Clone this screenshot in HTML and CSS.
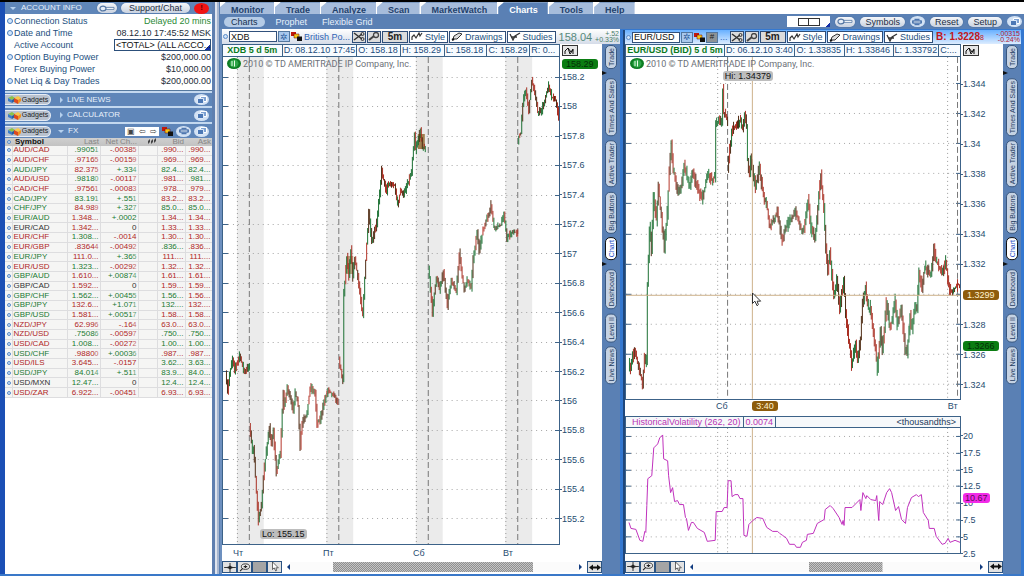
FILE: index.html
```html
<!DOCTYPE html>
<html lang="en">
<head>
<meta charset="utf-8">
<title>Charts</title>
<link rel="stylesheet" href="styles.css">
</head>
<body>
<svg class="defs" width="0" height="0" aria-hidden="true">
  <defs>
    <pattern id="weave" width="2" height="2" patternUnits="userSpaceOnUse"><rect width="2" height="2" fill="#c4c4c4"/><path d="M0 0h1v1H0zM1 1h1v1H1z" fill="#8f8f8f"/></pattern>
    <symbol id="key" viewBox="0 0 16 7"><path d="M5 2.4h10v2H5z" fill="#fff" stroke="#5476a3" stroke-width=".8"/><ellipse cx="4" cy="3.5" rx="3" ry="2.4" fill="#e7eef8" stroke="#5476a3" stroke-width="1.2"/></symbol>
    <symbol id="windows" viewBox="0 0 10 8"><path d="M3.5.5h6v5h-6z" fill="#7ea2d2" stroke="#fff"/><path d="M.5 2.5h6v5h-6z" fill="#4c78b5" stroke="#dbe8f8"/></symbol>
    <symbol id="printer" viewBox="0 0 12 8"><path d="M3 0h6v2H3zM3 6h6v2H3z" fill="#4d76ae"/><rect y="2" width="12" height="4" rx="1" fill="#4d76ae"/><path d="M2 4h8" stroke="#fff"/></symbol>
    <symbol id="colors" viewBox="0 0 11 9"><path d="M0 0h5v4H0z" fill="#c0180c"/><path d="M3 2h5v4H3z" fill="#f6c618" stroke="#600" stroke-width=".5"/><path d="M6 4.500h5V9H6z" fill="#111"/></symbol>
    <symbol id="gadget" viewBox="0 0 14 9"><path d="M1 3l4-2 3 2-3 2z" fill="#8ac34a"/><path d="M1 3l4 2v3L1 6z" fill="#3c7cc9"/><path d="M5 5l3-2v3L5 8z" fill="#2c5e9d"/><path d="M7 3l4-2 3 2-3 2z" fill="#f8c84a"/><path d="M7 3l4 2v4L7 7z" fill="#dc4a1e"/><path d="M11 5l3-2v3l-3 3z" fill="#f09020"/></symbol>
    <symbol id="shuffle" viewBox="0 0 12 9"><path d="M1 1l8 6M1 8l8-6" fill="none" stroke="#333" stroke-width="1.500"/><circle cx="9.500" cy="2" r="1.500" fill="none" stroke="#333"/><circle cx="9.500" cy="7" r="1.500" fill="none" stroke="#333"/></symbol>
    <symbol id="wrench" viewBox="0 0 12 9"><path d="M1 8l5-4" stroke="#444" stroke-width="2"/><circle cx="8" cy="3" r="2.500" fill="none" stroke="#444" stroke-width="1.300"/></symbol>
    <symbol id="style" viewBox="0 0 12 9"><path d="M1 8V5l2-2 2 3 3-5 1 3 2-3" fill="none" stroke="#333" stroke-width="1.200"/></symbol>
    <symbol id="pencil" viewBox="0 0 12 9"><path d="M2 7l1-3 5-3 3 1-5 5z" fill="#ddd" stroke="#333"/><path d="M1 8l2-1" stroke="#111" stroke-width="2"/></symbol>
    <symbol id="studies" viewBox="0 0 12 9"><path d="M1 2l3 6 2-4 5-3M2 5h6" fill="none" stroke="#333" stroke-width="1.300"/></symbol>
    <symbol id="cross" viewBox="0 0 13 10"><path d="M6.500 0v10M0 5h13" stroke="#222"/><path d="M4 5h5M6.500 3v4" stroke="#222" stroke-width="2"/></symbol>
    <symbol id="loupe" viewBox="0 0 13 10"><ellipse cx="7" cy="4" rx="4.500" ry="3" fill="#eee" stroke="#222"/><path d="M5 4h4M7 2.500v3M4 6L1 9" stroke="#222" stroke-width="1.200"/></symbol>
    <symbol id="arrow" viewBox="0 0 8 12"><path d="M1 0v9l2-2 2 4 1-1-1-3h3z" fill="#fff" stroke="#222" stroke-width=".8"/></symbol>
    <symbol id="both" viewBox="0 0 12 8"><path d="M0 4l4-3v2h4V1l4 3-4 3V5H4v2z" fill="#111"/></symbol>
    <symbol id="spark" viewBox="0 0 12 9"><path d="M1 8V5l3-3 3 4 2-3v5M4 2l2 6 3-4" fill="none" stroke="#111"/></symbol>
    <symbol id="coin" viewBox="0 0 14 11"><ellipse cx="7" cy="5.500" rx="7" ry="5.500" fill="#0c7d22"/><ellipse cx="7" cy="5.500" rx="4.500" ry="4" fill="#2fa548"/><path d="M5 3v5M7.500 2.500v6" stroke="#e9ffe9"/></symbol>
  </defs>
</svg>

<div class="app">
  <aside class="sidebar">
    <header class="bar">
      <span class="caret open"></span><h2 class="grow">ACCOUNT INFO</h2>
      <button class="pill key" aria-label="Login"><svg class="ic-key"><use href="#key"/></svg></button>
      <button class="pill support">Support/Chat</button>
      <button class="alert" aria-label="Alerts">!</button>
    </header>
    <dl class="info">
      <div class="dot"><dt>Connection Status</dt><dd class="up">Delayed 20 mins</dd></div>
      <div class="dot"><dt>Date and Time</dt><dd>08.12.10 17:45:52 MSK</dd></div>
      <div><dt><label for="account">Active Account</label></dt><dd><select id="account" class="account"><option>&lt;TOTAL&gt; (ALL ACCO...</option></select></dd></div>
      <div class="dot"><dt>Option Buying Power</dt><dd>$200,000.00</dd></div>
      <div><dt>Forex Buying Power</dt><dd>$10,000.00</dd></div>
      <div class="dot"><dt>Net Liq &amp; Day Trades</dt><dd>$200,000.00</dd></div>
    </dl>
    <header class="bar gadget">
      <button class="gadget-btn"><svg class="ic-gadget"><use href="#gadget"/></svg>Gadgets</button>
      <span class="caret"></span><h2 class="grow">LIVE NEWS</h2>
      <button class="round" aria-label="Detach"><svg class="ic-win"><use href="#windows"/></svg></button>
    </header>
    <header class="bar gadget">
      <button class="gadget-btn"><svg class="ic-gadget"><use href="#gadget"/></svg>Gadgets</button>
      <span class="caret"></span><h2 class="grow">CALCULATOR</h2>
      <button class="round" aria-label="Detach"><svg class="ic-win"><use href="#windows"/></svg></button>
    </header>
    <header class="bar gadget">
      <button class="gadget-btn"><svg class="ic-gadget"><use href="#gadget"/></svg>Gadgets</button>
      <span class="caret open"></span><h2 class="grow">FX</h2>
      <span class="nav"><button aria-label="List">▣</button><button aria-label="Back">⇦</button><button aria-label="Forward">⇨</button></span>
      <svg class="ic-colors"><use href="#colors"/></svg>
      <button class="round" aria-label="Print"><svg class="ic-win"><use href="#printer"/></svg></button>
      <button class="round" aria-label="Detach"><svg class="ic-win"><use href="#windows"/></svg></button>
    </header>
    <table class="quotes">
      <colgroup><col class="c-dot"><col class="c-sym"><col class="c-last"><col class="c-net"><col class="c-gap"><col class="c-bid"><col class="c-ask"></colgroup>
      <thead><tr><th><i class="bullet"></i></th><th class="sym">Symbol</th><th>Last</th><th>Net Ch...</th><th><svg class="ic-stack" viewBox="0 0 9 6"><path d="M1 3l2-2v3l-2 2zM4 3l2-2v3L4 6zM7 2l2-2v3L7 5z" fill="#444"/></svg></th><th>Bid</th><th>Ask</th></tr></thead>
      <tbody id="quotes"></tbody>
    </table>
  </aside>

  <div class="splitter"></div>

  <main class="main">
    <nav class="tabs">
      <a href="#monitor">Monitor</a><a href="#trade">Trade</a><a href="#analyze">Analyze</a><a href="#scan">Scan</a><a href="#marketwatch">MarketWatch</a><a href="#charts" class="on">Charts</a><a href="#tools">Tools</a><a href="#help">Help</a>
    </nav>
    <div class="subbar">
      <nav class="subnav"><a href="#charts" class="on">Charts</a><a href="#prophet">Prophet</a><a href="#grid">Flexible Grid</a></nav>
      <div class="actions">
        <button class="layout" aria-label="Grid layout"><i></i><i></i></button>
        <button class="pill key" aria-label="Login"><svg class="ic-key"><use href="#key"/></svg></button>
        <button class="pill">Symbols</button>
        <button class="round" aria-label="Print"><svg class="ic-win"><use href="#printer"/></svg></button>
        <button class="pill">Reset</button>
        <button class="pill">Setup</button>
        <button class="round" aria-label="Detach"><svg class="ic-win"><use href="#windows"/></svg></button>
      </div>
    </div>

    <div class="panels">
      <section class="panel">
        <div class="toolbar">
          <i class="bullet"></i>
          <input class="symbol" value="XDB" aria-label="Symbol">
          <button class="tiny" aria-label="Recent">✲</button>
          <svg class="ic-colors"><use href="#colors"/></svg>
          <span class="name">British Po...</span>
          <button class="tool" aria-label="Share"><svg class="ic"><use href="#shuffle"/></svg></button>
          <button class="tool" aria-label="Settings"><svg class="ic"><use href="#wrench"/></svg></button>
          <button class="tool frame">5m</button>
          <button class="tool text"><svg class="ic"><use href="#style"/></svg>Style</button>
          <button class="tool text"><svg class="ic"><use href="#pencil"/></svg>Drawings</button>
          <button class="tool text"><svg class="ic"><use href="#studies"/></svg>Studies</button>
          <span class="price">158.04</span>
          <span class="change">+.52<br>+0.33%</span>
        </div>
        <div class="body">
          <div class="work">
            <div class="ohlc left"><b>XDB 5 d 5m</b><span>D: 08.12.10 17:45</span><span>O: 158.18</span><span>H: 158.29</span><span>L: 158.18</span><span>C: 158.29</span><span>R: 0...</span></div>
            <div class="corner"><button class="spark" aria-label="Study"><svg class="ic"><use href="#spark"/></svg></button></div>
            <div class="plot">
              <svg id="xdb" class="canvas" viewBox="222 57 338 487" preserveAspectRatio="none"></svg>
              <p class="copy"><svg class="ic-coin"><use href="#coin"/></svg>2010 © TD AMERITRADE IP Company, Inc.</p>
              <span class="flag lo">Lo: 155.15</span>
            </div>
            <div class="axis a-left"><span>158.2</span><span>158</span><span>157.8</span><span>157.6</span><span>157.4</span><span>157.2</span><span>157</span><span>156.8</span><span>156.6</span><span>156.4</span><span>156.2</span><span>156</span><span>155.8</span><span>155.6</span><span>155.4</span><span>155.2</span><em class="tag green last-x">158.29</em></div>
            <div class="days d-left"><span>Чт</span><span>Пт</span><span>Сб</span><span>Вт</span></div>
            <div class="scroll">
              <button class="sq" aria-label="Crosshair"><svg class="ic"><use href="#cross"/></svg></button><button class="sq" aria-label="Zoom"><svg class="ic"><use href="#loupe"/></svg></button><button class="sq dim" aria-label="Pan"></button><button class="sq" aria-label="Pointer"><svg class="ic-arrow"><use href="#arrow"/></svg></button>
              <span class="tri back"></span>
              <div class="track t-left"><svg class="thumb"><rect width="100%" height="100%" fill="url(#weave)"/></svg></div>
              <span class="tri fwd"></span>
              <button class="sq" aria-label="Fit"><svg class="ic"><use href="#both"/></svg></button>
            </div>
          </div>
          <nav class="side"><a href="#t">Trade</a><i class="mark"></i><a href="#ts">Times And Sales</a><a href="#at">Active Trader</a><a href="#bb">Big Buttons</a><a href="#c" class="on">Chart</a><i class="mark"></i><a href="#d">Dashboard</a><a href="#l2">Level II</a><a href="#ln">Live News</a></nav>
        </div>
      </section>

      <section class="panel active">
        <div class="toolbar">
          <i class="bullet"></i>
          <input class="symbol" value="EUR/USD" aria-label="Symbol">
          <button class="tiny" aria-label="Recent">✲</button>
          <svg class="ic-colors"><use href="#colors"/></svg>
          <button class="tiny hash">#</button>
          <span class="name short">...</span>
          <button class="tool" aria-label="Share"><svg class="ic"><use href="#shuffle"/></svg></button>
          <button class="tool" aria-label="Settings"><svg class="ic"><use href="#wrench"/></svg></button>
          <button class="tool frame">5m</button>
          <button class="tool text"><svg class="ic"><use href="#style"/></svg>Style</button>
          <button class="tool text"><svg class="ic"><use href="#pencil"/></svg>Drawings</button>
          <button class="tool text"><svg class="ic"><use href="#studies"/></svg>Studies</button>
          <span class="price bid">B: 1.3228<small>8</small></span>
          <span class="change down">-.00315<br>-0.24%</span>
        </div>
        <div class="body">
          <div class="work two">
            <div class="ohlc right"><b>EUR/USD (BID) 5 d 5m</b><span>D: 06.12.10 3:40</span><span>O: 1.33835</span><span>H: 1.33846</span><span>L: 1.33792</span><span>C:...</span></div>
            <div class="corner"><button class="spark" aria-label="Study"><svg class="ic"><use href="#spark"/></svg></button></div>
            <div class="plot">
              <svg id="eur" class="canvas" viewBox="625 57 337 342" preserveAspectRatio="none"></svg>
              <p class="copy"><svg class="ic-coin"><use href="#coin"/></svg>2010 © TD AMERITRADE IP Company, Inc.</p>
              <span class="flag hi">Hi: 1.34379</span>
              <svg class="pointer"><use href="#arrow"/></svg>
            </div>
            <div class="axis a-right"><span>1.344</span><span>1.342</span><span>1.34</span><span>1.338</span><span>1.336</span><span>1.334</span><span>1.332</span><span class="blank"></span><span>1.328</span><span>1.326</span><span>1.324</span><em class="tag gold here">1.3299</em><em class="tag green last-e">1.3266</em></div>
            <div class="days d-right"><span>Сб</span><em class="tag gold">3:40</em><span>Вт</span></div>
            <div class="study"><span>HistoricalVolatility (262, 20)</span><span>0.0074</span><span class="unit">&lt;thousandths&gt;</span></div>
            <div class="plot">
              <svg id="vol" class="canvas" viewBox="625 427 337 126" preserveAspectRatio="none"></svg>
            </div>
            <div class="axis a-vol"><span>20</span><span>17.5</span><span>15</span><span>12.5</span><span>10</span><span>7.5</span><span>5</span><span>2.5</span><em class="tag pink">10.67</em></div>
            <div class="scroll">
              <button class="sq" aria-label="Crosshair"><svg class="ic"><use href="#cross"/></svg></button><button class="sq" aria-label="Zoom"><svg class="ic"><use href="#loupe"/></svg></button><button class="sq dim" aria-label="Pan"></button><button class="sq" aria-label="Pointer"><svg class="ic-arrow"><use href="#arrow"/></svg></button>
              <span class="tri back"></span>
              <div class="track t-right"><svg class="thumb"><rect width="100%" height="100%" fill="url(#weave)"/></svg></div>
              <span class="tri fwd"></span>
              <button class="sq" aria-label="Fit"><svg class="ic"><use href="#both"/></svg></button>
            </div>
          </div>
          <nav class="side"><a href="#t">Trade</a><i class="mark"></i><a href="#ts">Times And Sales</a><a href="#at">Active Trader</a><a href="#bb">Big Buttons</a><a href="#c" class="on">Chart</a><i class="mark"></i><a href="#d">Dashboard</a><a href="#l2">Level II</a><a href="#ln">Live News</a></nav>
        </div>
      </section>
    </div>
  </main>
</div>
<script src="app.js"></script>
</body>
</html>
```
FILE: styles.css
```css
* { box-sizing: border-box; }
html, body { height: 100%; }
body { margin: 0; background: #5a80b4; color: #26384e; font: 9px/10px "Liberation Sans", Arial, sans-serif; overflow: hidden; }
button, input, select { font: inherit; color: inherit; margin: 0; padding: 0; border: 0; background: none; border-radius: 0; }
button { display: flex; align-items: center; justify-content: center; }
a { color: inherit; text-decoration: none; }
h2, p, dl, dd { margin: 0; font: inherit; }
.defs { position: absolute; }
.app { display: flex; height: 100vh; border-top: 2px solid #000; border-bottom: 2px solid #3a78c8; }
.grow { flex: 1; }

/* icons */
.ic { width: 12px; height: 9px; flex: none; }
.ic-key { width: 16px; height: 7px; }
.ic-win { width: 10px; height: 8px; }
.ic-colors { width: 11px; height: 9px; flex: none; }
.ic-gadget { width: 14px; height: 9px; flex: none; }
.ic-arrow { width: 8px; height: 10px; }
.ic-coin { width: 14px; height: 11px; flex: none; }
.ic-stack { width: 9px; height: 6px; }
.bullet { display: inline-block; width: 5px; height: 5px; border-radius: 50%; border: 1px solid #5b8bc8; background: #cfe2f7; flex: none; }

/* sidebar */
.sidebar { width: 212px; flex: none; border-left: 5px solid #1b4fb5; background: #fff; display: flex; flex-direction: column; }
.bar { display: flex; align-items: center; gap: 4px; height: 12px; flex: none; padding: 0 3px; background: #5f86b9; color: #e9f1fb; font-size: 8px; }
.bar.gadget { height: 15px; border-top: 2px solid #c3d8ef; padding-left: 0; gap: 3px; }
.bar.gadget + .bar.gadget { height: 16px; }
.caret { width: 0; height: 0; border: 3px solid transparent; border-left-color: #b5d0ee; border-right: 0; margin: 0 1px 0 6px; }
.caret.open { border: 3px solid transparent; border-top-color: #b5d0ee; border-bottom: 0; margin: 0 1px 0 2px; }
.gadget .caret.open { margin: 0 1px 0 4px; }
.pill { height: 10px; padding: 0 5px; border-radius: 5px; background: linear-gradient(#f4f6fa, #c9d2e0); color: #1c2c42; font-size: 9px; box-shadow: 0 0 1px #24446e; white-space: nowrap; }
.pill.key { padding: 0 2px; }
.pill.support { padding: 0 8px; }
.alert { width: 15px; height: 11px; border-radius: 50%; background: #f01414; color: #600; font-weight: 700; }
.round { width: 15px; height: 11px; border-radius: 50%; background: #d3e2f4; flex: none; }
.gadget-btn { height: 11px; width: 46px; border-radius: 0 6px 6px 0; background: #b9c2cf; color: #222; font-size: 7px; gap: 1px; border: 1px solid #e6ecf4; border-left: 0; }
.nav { display: flex; gap: 4px; padding: 0 2px; height: 9px; background: #fff; color: #444; line-height: 9px; }
.info { padding: 1px 1px 3px 9px; border-bottom: 1px solid #55799f; color: #1d4f80; }
.info > div { display: flex; justify-content: space-between; height: 12px; align-items: center; position: relative; }
.info .dot::before { content: ""; position: absolute; left: -7px; top: 3px; width: 4px; height: 4px; border: 1px solid #4a80c0; border-radius: 50%; background: #d4e6fa; }
.info dd { color: #222c38; }
.info dd.up { color: #2b8a35; }
.account { appearance: none; display: block; width: 97px; height: 12px; padding-left: 1px; border: 1px solid #2c4f7a; background: linear-gradient(135deg, transparent 95%, #1430a8 95%) #fff; color: #111; overflow: hidden; }
.quotes { table-layout: fixed; border-collapse: collapse; width: 100%; height: 260px; font-size: 8px; line-height: 8px; color: #333; }
.c-dot { width: 7px; } .c-sym { width: 55px; } .c-last { width: 33px; } .c-net { width: 38px; } .c-gap { width: 19px; } .c-bid { width: 28px; } .c-ask { width: 27px; }
.quotes th { background: linear-gradient(#cfcfcf, #c2c2c2); color: #858585; font-weight: 400; text-align: right; padding: 0 1px; font-size: 8px; }
.quotes th.sym { color: #111; font-weight: 700; text-align: left; padding-left: 3px; }
.quotes td { padding: 0 1px 0 0; text-align: right; border: 1px solid #dddddf; border-width: 0 1px 1px 0; white-space: nowrap; overflow: hidden; background: #f5f5f4; }
.quotes td:nth-child(2) { text-align: left; padding-left: 1px; }
.quotes td:first-child { text-align: left; padding: 0 0 0 1px; }
.quotes .bullet { display: block; margin: 0 auto; width: 4px; height: 4px; }
.quotes small { font-size: 7px; opacity: .7; }
.r { color: #b02626; } .g { color: #217a32; } .k { color: #333; }
.splitter { width: 8px; flex: none; background: linear-gradient(90deg, #5f7fb0 0 3px, #dfe4ee 3px 5px, #a7b6d0 5px 7px, #5a7fb2 7px); }

/* tabs */
.main { flex: 1; min-width: 0; display: flex; flex-direction: column; background: #fff; }
.tabs { display: flex; gap: 1px; height: 12px; align-items: flex-end; flex: none; }
.tabs a { padding: 1px 10px 0 11px; height: 12px; line-height: 12px; font-weight: 700; color: #1f416c; background: #a6bcdb; clip-path: polygon(6px 0, 100% 0, 100% 100%, 0 100%, 0 5px); border-top: 1px solid #7e9cc4; }
.tabs .on { background: #5a80b4; color: #fff; }
.subbar { display: flex; justify-content: space-between; align-items: center; height: 15px; flex: none; background: #5a80b4; color: #e8f1fc; }
.subnav { display: flex; gap: 7px; padding-left: 4px; }
.subnav a { padding: 0 4px; }
.subnav .on { background: #b5cbe6; color: #14304f; border-radius: 6px; padding: 0 7px; }
.actions { display: flex; align-items: center; gap: 5px; padding-right: 2px; }
.layout { width: 43px; height: 11px; background: linear-gradient(135deg, transparent 91%, #1430a8 91%) #fff; }
.layout i { width: 11px; height: 8px; border: 1px solid #333; }
.layout i + i { border-left: 0; }

/* chart panels */
.panels { flex: 1; min-height: 0; display: grid; grid-template-columns: 400fr 404fr; }
.panel { display: flex; flex-direction: column; min-width: 0; min-height: 0; border-left: 2px solid #6d90bf; }
.panel.active { border: solid #3478d0; border-width: 1px 3px 0 5px; border-left-style: ridge; }
.toolbar { display: flex; align-items: center; gap: 1px; height: 15px; flex: none; padding: 0 0 0 1px; background: linear-gradient(#fff, #d5dce8); white-space: nowrap; overflow: hidden; }
.active .toolbar { background: linear-gradient(#68b0ff, #dcecff); height: 14px; }
.symbol { width: 48px; height: 11px; flex: none; padding-left: 1px; border: 1px solid #31517c; background: #fff; color: #111; }
.tiny { width: 12px; height: 11px; flex: none; background: #a9c8ec; color: #2c5c9b; border: 1px solid #53779f; }
.tiny.hash { background: #8c9296; color: #222; font-size: 8px; }
.name { color: #3165b5; padding: 0 1px; flex: none; }
.tool { height: 12px; min-width: 14px; flex: none; padding: 0; border: 1px solid #2e4d78; background: #dcdcdc; }
.tool.frame { width: 26px; font-weight: 700; font-size: 10px; color: #222; }
.tool.text { background: #fff; color: #235080; gap: 2px; padding: 0 2px 0 1px; }
.price { font-size: 11px; color: #57897c; margin-left: 2px; flex: 1; }
.price.bid { color: #c01820; font-weight: 700; font-size: 10px; }
.price small { font-size: 7px; font-weight: 400; }
.change { font-size: 7px; line-height: 6px; color: #4d7f68; text-align: right; padding-right: 1px; }
.change.down { color: #b02030; }
.body { flex: 1; min-height: 0; display: flex; }
.work { flex: 1; min-width: 0; display: grid; grid-template: 13px 1fr 15px 14px / 1fr 42px; background: #fff; }
.work.two { grid-template-rows: 13px 342fr 16px 12px 126fr 6px 14px; }
.ohlc { display: grid; border: 1px solid #3c6288; background: #f7fbff; color: #1c4c7c; line-height: 11px; overflow: hidden; white-space: nowrap; }
.ohlc.left { grid-template-columns: 59fr 75fr 44fr 44fr 43fr 43fr 30fr; }
.ohlc.right { grid-template-columns: 99fr 71fr 50fr 49fr 46fr 22fr; }
.ohlc > * { padding-left: 1px; border-left: 1px solid #3c6288; min-width: 0; overflow: hidden; }
.ohlc b { color: #0b7a1c; border-left: 0; text-align: center; font-size: 9px; padding: 0; }
.corner { display: flex; align-items: center; padding-left: 2px; }
.spark { width: 16px; height: 11px; border: 1px solid #333; background: #e6e6e6; }
.plot { position: relative; min-width: 0; min-height: 0; border: solid #3c6288; border-width: 0 1px 1px; display: flex; }
.canvas { display: block; flex: 1; min-width: 0; width: 100%; height: 100%; }
.copy { position: absolute; left: 4px; top: 1px; display: flex; align-items: center; gap: 2px; font: 9px/10px Roboto, sans-serif; color: #6c7178; white-space: nowrap; }
.flag { position: absolute; padding: 0 2px; height: 10px; line-height: 10px; border-radius: 3px; background: #bdbdbd; color: #111; white-space: nowrap; font-size: 9px; }
.flag.lo { left: 11%; bottom: 1%; }
.flag.hi { left: 29%; top: 4%; }
.pointer { position: absolute; left: 37%; top: 69%; width: 12px; height: 14px; }
.axis { position: relative; display: flex; flex-direction: column; justify-content: space-between; color: #1f4c70; min-height: 0; }
.axis span { display: flex; align-items: center; height: 10px; }
.axis span::before { content: ""; width: 2px; height: 1px; background: #3c6288; }
.axis .blank::before { background: none; }
.a-left { padding: 15px 0 21px; }
.a-right { padding: 22px 0 10px; }
.a-vol { padding-top: 3px; margin-bottom: -5px; }
.tag { position: absolute; left: 2px; padding: 0 4px; border-radius: 3px; font-style: normal; height: 10px; line-height: 10px; }
.tag.green { background: #0b7d12; color: #032f06; }
.tag.gold { background: #8e5c0c; color: #fff3d0; }
.tag.pink { background: #f22ae8; color: #5a0a56; top: 50%; padding: 0 2px; }
.last-x { top: 0; margin-top: 2px; }
.here { top: 68%; }
.last-e { top: 83%; }
.days { grid-column: 1 / -1; display: grid; align-items: center; color: #1f4c70; }
.days .tag { position: static; justify-self: start; }
.d-left { grid-template-columns: 90fr 90fr 90fr 99fr; padding-left: 11px; }
.d-right { grid-template-columns: 36fr 195fr 55fr; padding-left: 91px; padding-bottom: 3px; }
.study { display: flex; border: 1px solid #3c6288; background: #f6f8fa; color: #b834b4; line-height: 10px; white-space: nowrap; }
.study span { padding: 0 2px; border-right: 1px solid #3c6288; }
.study span:first-child { padding-left: 6px; }
.study .unit { margin-left: auto; border: 0; color: #1f3c5c; padding-right: 4px; }
.study + .plot { grid-column: 1; }
.scroll { grid-column: 1 / -1; grid-row: -2; display: flex; align-items: center; }
.sq { width: 15px; height: 12px; flex: none; border: 1px solid #2c5482; background: #e2e2e2; }
.sq.dim { background: #a5a5a5; }
.tri { width: 0; height: 0; border: 3px solid transparent; flex: none; }
.tri.back { border-right-color: #123c80; border-left: 0; margin-left: 5px; }
.tri.fwd { border-left-color: #123c80; border-right: 0; margin-right: 5px; }
.track { flex: 1; height: 10px; display: grid; background: #fbfbfb; }
.t-left { grid-template-columns: 43fr 201fr 46fr; }
.t-right { grid-template-columns: 117fr 74fr 98fr; }
.thumb { grid-column: 2; width: 100%; height: 10px; }
.side { width: 18px; flex: none; background: #5a80b4; display: flex; flex-direction: column; align-items: center; gap: 4px; padding-top: 1px; }
.side a { writing-mode: vertical-rl; transform: rotate(180deg); width: 12px; line-height: 11px; padding: 2px 0; border: 1px solid #39577f; border-radius: 5px; background: #c5d2e3; color: #1f3b60; font-size: 7px; white-space: nowrap; }
.side .on { background: #fff; color: #1c50c8; border-color: #111; }
.mark { width: 0; height: 0; border: 2px solid transparent; border-left: 5px solid #111; border-right: 0; align-self: flex-start; margin: -2px 0 -1px; }
```
FILE: app.js
```js
// Each quote: symbol, last, net change, bid, ask, and one colour letter per cell.
// A "|" splits off the fractional pip, which is drawn smaller.
const quotes = [
  ['AUD/CAD', '.9905|1', '-.0038|5', '.990...', '.990...', 'rgrrr'],
  ['AUD/CHF', '.9716|5', '-.0015|9', '.969...', '.969...', 'rrrrr'],
  ['AUD/JPY', '82.37|5', '+.33|4', '82.4...', '82.4...', 'grggg'],
  ['AUD/USD', '.9818|0', '-.0011|7', '.981...', '.981...', 'rgrrg'],
  ['CAD/CHF', '.9756|1', '-.0008|3', '.978...', '.979...', 'rrrrr'],
  ['CAD/JPY', '83.19|1', '+.55|1', '83.2...', '83.2...', 'gggrr'],
  ['CHF/JPY', '84.98|9', '+.32|7', '85.0...', '85.0...', 'grggg'],
  ['EUR/AUD', '1.348...', '+.0002', '1.34...', '1.34...', 'grgrr'],
  ['EUR/CAD', '1.342...', '0', '1.33...', '1.33...', 'krkrr'],
  ['EUR/CHF', '1.308...', '-.0014', '1.30...', '1.30...', 'rgrrr'],
  ['EUR/GBP', '.8364|4', '-.0049|2', '.836...', '.836...', 'rrrgr'],
  ['EUR/JPY', '111.0...', '+.36|5', '111....', '111....', 'grgrr'],
  ['EUR/USD', '1.323...', '-.0029|2', '1.32...', '1.32...', 'rgrrr'],
  ['GBP/AUD', '1.610...', '+.0087|4', '1.61...', '1.61...', 'grgrr'],
  ['GBP/CAD', '1.592...', '0', '1.59...', '1.59...', 'krkrr'],
  ['GBP/CHF', '1.562...', '+.0045|5', '1.56...', '1.56...', 'ggggr'],
  ['GBP/JPY', '132.6...', '+1.07|1', '132....', '132....', 'grggr'],
  ['GBP/USD', '1.581...', '+.0051|7', '1.58...', '1.58...', 'grgrr'],
  ['NZD/JPY', '62.99|6', '-.16|4', '63.0...', '63.0...', 'rrrrr'],
  ['NZD/USD', '.7508|6', '-.0059|7', '.750...', '.750...', 'rgrgg'],
  ['USD/CAD', '1.008...', '-.0027|2', '1.00...', '1.00...', 'rgrgg'],
  ['USD/CHF', '.9880|0', '+.0003|6', '.987...', '.987...', 'grgrr'],
  ['USD/ILS', '3.645...', '-.0157', '3.62...', '3.63...', 'rrrgg'],
  ['USD/JPY', '84.01|4', '+.51|1', '83.9...', '84.0...', 'ggggg'],
  ['USD/MXN', '12.47...', '0', '12.4...', '12.4...', 'kgkgg'],
  ['USD/ZAR', '6.922...', '-.0045|1', '6.93...', '6.93...', 'rrrrr'],
];
const cell = (text, colour) => {
  const [main, pip] = text.split('|');
  return `<td class="${colour}">${main}${pip ? `<small>${pip}</small>` : ''}</td>`;
};
document.getElementById('quotes').innerHTML = quotes.map(([sym, last, net, bid, ask, c]) =>
  `<tr><td><i class="bullet"></i></td>${cell(sym, c[0])}${cell(last, c[1])}${cell(net, c[2])}<td></td>${cell(bid, c[3])}${cell(ask, c[4])}</tr>`).join('');

let seed = 7;
const rand = () => (seed = (seed * 16807) % 2147483647) / 2147483647;
const line = (x1, y1, x2, y2, stroke, dash = '', w = 1) =>
  `<path d="M${x1} ${y1}L${x2} ${y2}" stroke="${stroke}" stroke-width="${w}" ${dash ? `stroke-dasharray="${dash}"` : ''} fill="none"/>`;

// Price bars along a run of "x,y" turning points.
function bars(run, size) {
  const pts = run.split(' ').map(p => p.split(',').map(Number));
  let out = '';
  for (let i = 1; i < pts.length; i++) {
    const [x0, y0] = pts[i - 1], [x1, y1] = pts[i];
    for (let x = x0; x < x1; x++) {
      const a = y0 + (y1 - y0) * (x - x0) / (x1 - x0);
      const b = y0 + (y1 - y0) * (x + 1 - x0) / (x1 - x0);
      const up = b < a, pick = rand();
      const colour = pick < 0.3 ? '#4f2c14' : pick < 0.45 ? (up ? '#b5362a' : '#1f7a38') : up ? '#1b6f32' : '#a82e22';
      out += line(x + .5, Math.min(a, b) - rand() * size, x + .5, Math.max(a, b) + rand() * size, colour);
    }
  }
  return out;
}
function grid(box, ys, dotted, dashed) {
  const [l, t, r, b] = box;
  let out = '';
  ys.forEach(y => {
    out += line(l, y, r, y, '#a5a5a5', '1 4') + line(l, y, l + 5, y, '#3c6288') + line(r - 4, y, r, y, '#3c6288');
  });
  dotted.forEach(x => { out += line(x, t, x, b, '#999', '1 3'); });
  dashed.forEach(x => { out += line(x, t, x, b, '#777', '6 3'); });
  return out;
}
const steps = (start, step, n) => Array.from({ length: n }, (_, i) => Math.round(start + i * step) + .5);

const xdb = [
  '225,375 227,391 229,375 232,358 234,370 239,355 244,372 249,366',
  '249,425 252,450 253,447 258,521 261,505 264,467 269,427 271,446 273,432 276,472 280,453 283,393 284,406 287,387 293,410 295,392 298,406 300,446 302,423 307,413 310,387 315,393 317,423 320,420 324,403 328,389 333,395 338,402',
  '339,360 341,370 343,381 344,293 347,257 349,277 351,250 353,277 355,257 358,277 363,316 366,260 369,213 372,243 377,223 380,193 382,170 387,193 388,185 395,185 398,205 401,190 404,195 412,173 415,135 416,150 418,143 421,130 423,147 426,150',
  '429,267 433,312 437,277 440,290 444,273 448,305 452,280 457,293 460,253 465,290 468,280 472,287 474,260 478,233 480,250 484,230 490,213 492,205 495,227 502,225 505,215 508,238 515,232 519,233',
  '519,140 522,133 524,103 527,90 530,110 533,80 535,87 539,113 543,110 547,97 550,85 553,97 557,100 560,117',
];
document.getElementById('xdb').innerHTML =
  [236, 326, 416, 506].map(x => `<rect x="${x}" y="57" width="27" height="487" fill="#ebebeb"/>`).join('') +
  grid([222, 57, 560, 544], steps(77, 29.4, 16), [236.5, 326.5, 416.5, 506.5], [248.5, 338.5, 428.5, 518.5]) +
  '<rect x="418" y="134" width="7" height="15" fill="#a08050"/><rect x="346" y="256" width="7" height="18" fill="#a08050" opacity=".7"/>' +
  xdb.map(r => bars(r, 5)).join('');

const eur = [
  '628,363 630,370 633,350 637,363 642,383 644,360 646,363 647,287 648,260 649,227 651,250 653,197 656,220 658,187 660,207 664,247 667,213 669,170 671,143 673,170 678,193 682,183 684,163 689,187 693,173 697,187 702,200 706,183 708,173 712,180 715,177 716,123 722,120 723,90 724,113 728,122',
  '728,170 730,147 733,127 737,127 740,120 743,128 745,113 747,127 748,160 750,173 751,160 753,170 756,187 760,168 763,190 768,210 770,227 773,222 778,212 783,240 787,227 793,217 797,213 802,230 805,227 809,200 812,227 816,241 820,197 822,175 825,210 827,247 829,270 831,253 835,297 838,280 841,310 845,280 847,313 850,340 853,365 857,343 859,360 862,337 864,303 867,287 870,310 872,307 876,340 879,372 882,330 884,353 888,303 892,330 897,300 899,327 903,307 907,350 909,353 912,317 914,330 917,307 919,310 921,273 924,287 927,267 933,277 936,250 938,260 944,273 948,262 951,287 955,293 959,285 962,285',
];
document.getElementById('eur').innerHTML =
  grid([625, 57, 962, 399], steps(83, 30.1, 11), [717.500, 949.5], [727.5, 959.5]) +
  eur.map(r => bars(r, 7)).join('') +
  line(752.5, 57, 752.5, 399, '#cdb08a') + line(625, 295.5, 962, 295.5, '#cdb08a');

const vol = '628,522 630,528 635,529 639,540 642,541 644,531 645,532 646,505 647,478 651,475 653,447 657,443 659,437 662,434 663,458 667,460 668,475 670,492 672,487 674,501 677,500 679,504 683,504 685,517 686,518 688,530 691,522 693,522 697,528 704,532 707,541 715,540 716,511 722,511 724,507 727,507 728,480 731,480 732,496 735,494 738,494 740,498 743,498 744,535 747,536 749,524 753,520 757,517 763,518 767,527 773,531 778,531 780,533 783,535 787,538 790,544 795,544 797,547 801,547 803,542 807,540 808,534 814,533 818,523 825,519 826,509 831,505 834,508 840,517 843,524 844,520 845,525 846,507 853,507 861,499 862,510 864,492 867,498 868,495 872,499 877,500 878,495 880,520 881,501 884,504 888,492 891,488 893,492 897,510 900,506 903,519 907,523 909,507 913,497 918,494 920,496 923,494 925,512 930,520 931,528 936,528 938,536 944,544 947,543 950,538 952,542 957,540 962,542';
document.getElementById('vol').innerHTML =
  grid([625, 427, 962, 553], steps(435, 16.8, 7), [717.5, 727.5, 949.5], []) +
  line(752.5, 427, 752.5, 553, '#cdb08a') +
  `<polyline points="${vol}" fill="none" stroke="#c030bc"/>`;
```
